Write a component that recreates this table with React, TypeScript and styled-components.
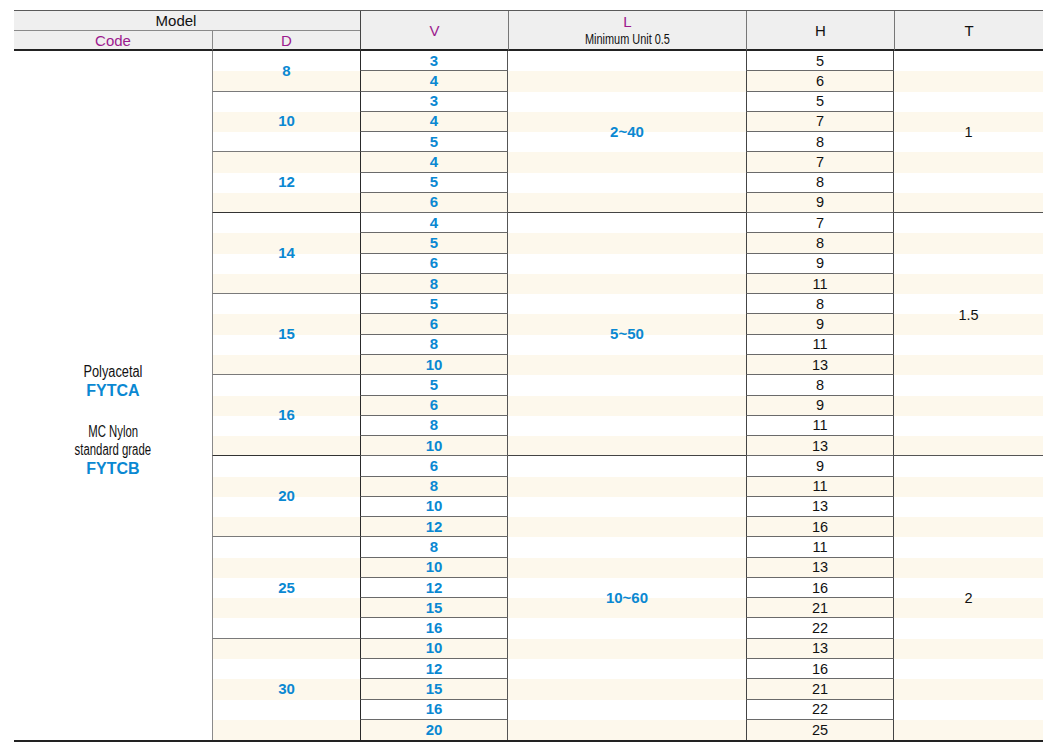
import React from "react";
import styled, { createGlobalStyle } from "styled-components";

const GlobalStyle = createGlobalStyle`
  html, body {
    margin: 0;
    padding: 0;
    background: #ffffff;
    font-family: "Liberation Sans", Arial, sans-serif;
  }
`;

const ROW_H = 20.27;
const BLUE = "#0a88d2";
const PURPLE = "#9c1a8e";
const STRIPE = "#fdf8ec";

type Group = { d: number; rows: [number, number][] };

const groups: Group[] = [
  { d: 8, rows: [[3, 5], [4, 6]] },
  { d: 10, rows: [[3, 5], [4, 7], [5, 8]] },
  { d: 12, rows: [[4, 7], [5, 8], [6, 9]] },
  { d: 14, rows: [[4, 7], [5, 8], [6, 9], [8, 11]] },
  { d: 15, rows: [[5, 8], [6, 9], [8, 11], [10, 13]] },
  { d: 16, rows: [[5, 8], [6, 9], [8, 11], [10, 13]] },
  { d: 20, rows: [[6, 9], [8, 11], [10, 13], [12, 16]] },
  { d: 25, rows: [[8, 11], [10, 13], [12, 16], [15, 21], [16, 22]] },
  { d: 30, rows: [[10, 13], [12, 16], [15, 21], [16, 22], [20, 25]] },
];

const ranges = [
  { l: "2~40", t: "1", rows: 8, lift: 0 },
  { l: "5~50", t: "1.5", rows: 12, lift: 38 },
  { l: "10~60", t: "2", rows: 14, lift: 0 },
];

const TOTAL = groups.reduce((n, g) => n + g.rows.length, 0);

const Page = styled.div`
  padding: 10px 17px 0 14px;
`;

const Grid = styled.div`
  display: grid;
  width: 1029px;
  grid-template-columns: 198px 148px 148px 238px 148px 149px;
  grid-template-rows: 20px 20px repeat(${TOTAL}, ${ROW_H}px);
  border-top: 1px solid #5a5a5a;
  border-bottom: 2px solid #222;
  box-sizing: content-box;
`;

const HeadCell = styled.div<{
  $col: string;
  $row: string;
  $left?: string;
  $bottom?: string;
  $color?: string;
  $shift?: number;
}>`
  grid-column: ${(p) => p.$col};
  grid-row: ${(p) => p.$row};
  background: #efefef;
  box-sizing: border-box;
  border-left: ${(p) => (p.$left ? `1px solid ${p.$left}` : "none")};
  border-bottom: ${(p) => p.$bottom ?? "2px solid #222"};
  padding-right: ${(p) => p.$shift ?? 0}px;
  display: flex;
  flex-direction: column;
  align-items: center;
  justify-content: center;
  color: ${(p) => p.$color ?? "#111"};
  font-size: 15px;
  line-height: 17px;
`;

/* condensed text: no narrow face is installed, so squeeze the regular one */
const Narrow = styled.span<{ $size: number; $squeeze: number }>`
  display: inline-block;
  font-size: ${(p) => p.$size}px;
  transform: scaleX(${(p) => p.$squeeze});
  white-space: nowrap;
  color: #111;
`;

const SubNote = styled(Narrow)`
  line-height: 15px;
  margin-top: 2px;
`;

const Stripe = styled.div<{ $row: number }>`
  grid-column: 2 / -1;
  grid-row: ${(p) => p.$row};
  background: ${STRIPE};
`;

const CodeCell = styled.div`
  grid-column: 1;
  grid-row: 3 / -1;
  display: flex;
  flex-direction: column;
  align-items: center;
  padding-top: 312px;
  text-align: center;
`;

const Material = styled(Narrow)`
  line-height: 18px;
`;

const CodeName = styled.span<{ $gap?: boolean }>`
  font-weight: bold;
  font-size: 16px;
  line-height: 20px;
  color: ${BLUE};
  margin-bottom: ${(p) => (p.$gap ? "22px" : "0")};
`;

const Cell = styled.div<{
  $col: number;
  $row: string;
  $blue?: boolean;
  $left?: string;
  $right?: string;
  $bottom?: string;
  $lift?: number;
}>`
  grid-column: ${(p) => p.$col};
  grid-row: ${(p) => p.$row};
  box-sizing: border-box;
  display: flex;
  align-items: center;
  justify-content: center;
  border-left: ${(p) => (p.$left ? `1px solid ${p.$left}` : "none")};
  border-right: ${(p) => (p.$right ? `1px solid ${p.$right}` : "none")};
  border-bottom: ${(p) => (p.$bottom ? `1px solid ${p.$bottom}` : "none")};
  padding-bottom: ${(p) => p.$lift ?? 0}px;
  font-size: ${(p) => (p.$blue ? 15 : 14.5)}px;
  line-height: 16px;
  font-weight: ${(p) => (p.$blue ? "bold" : "normal")};
  color: ${(p) => (p.$blue ? BLUE : "#111")};
`;

export default function App() {
  const body: React.ReactNode[] = [];
  const BASE = 3;

  for (let i = 0; i < TOTAL; i++) {
    if (i % 2 === 1) body.push(<Stripe key={`s${i}`} $row={BASE + i} />);
  }

  let r = 0;
  groups.forEach((g, gi) => {
    const start = r;
    const end = start + g.rows.length;
    const last = gi === groups.length - 1;
    const major = end === 8 || end === 20;
    body.push(
      <Cell
        key={`d${gi}`}
        $col={2}
        $row={`${BASE + start} / span ${g.rows.length}`}
        $blue
        $left="#8a8a8a"
        $bottom={last ? undefined : major ? "#333" : "#7a7a7a"}
      >
        {g.d}
      </Cell>
    );
    g.rows.forEach(([v, h]) => {
      const row = `${BASE + r}`;
      const isLast = r === TOTAL - 1;
      body.push(
        <Cell key={`v${r}`} $col={3} $row={row} $blue $left="#2a2a2a" $right="#555" $bottom={isLast ? undefined : "#6a6a6a"}>
          {v}
        </Cell>,
        <Cell key={`h${r}`} $col={5} $row={row} $left="#444" $right="#444" $bottom={isLast ? undefined : "#6a6a6a"}>
          {h}
        </Cell>
      );
      r++;
    });
  });

  let s = 0;
  ranges.forEach((rg, i) => {
    const last = i === ranges.length - 1;
    const row = `${BASE + s} / span ${rg.rows}`;
    body.push(
      <Cell key={`l${i}`} $col={4} $row={row} $blue $bottom={last ? undefined : "#444"}>
        {rg.l}
      </Cell>,
      <Cell key={`t${i}`} $col={6} $row={row} $bottom={last ? undefined : "#555"} $lift={rg.lift}>
        {rg.t}
      </Cell>
    );
    s += rg.rows;
  });

  return (
    <Page>
      <GlobalStyle />
      <Grid>
        <HeadCell $col="1 / 3" $row="1" $bottom="1px solid #8a8a8a" $shift={22}>
          Model
        </HeadCell>
        <HeadCell $col="1" $row="2" $color={PURPLE}>
          Code
        </HeadCell>
        <HeadCell $col="2" $row="2" $left="#8a8a8a" $color={PURPLE}>
          D
        </HeadCell>
        <HeadCell $col="3" $row="1 / 3" $left="#444" $color={PURPLE}>
          V
        </HeadCell>
        <HeadCell $col="4" $row="1 / 3" $left="#777" $color={PURPLE}>
          L
          <SubNote $size={14} $squeeze={0.78}>
            Minimum Unit 0.5
          </SubNote>
        </HeadCell>
        <HeadCell $col="5" $row="1 / 3" $left="#777">
          H
        </HeadCell>
        <HeadCell $col="6" $row="1 / 3" $left="#777">
          T
        </HeadCell>

        <CodeCell>
          <Material $size={16} $squeeze={0.8}>Polyacetal</Material>
          <CodeName $gap>FYTCA</CodeName>
          <Material $size={16} $squeeze={0.71}>MC Nylon</Material>
          <Material $size={16} $squeeze={0.71}>standard grade</Material>
          <CodeName>FYTCB</CodeName>
        </CodeCell>

        {body}
      </Grid>
    </Page>
  );
}
